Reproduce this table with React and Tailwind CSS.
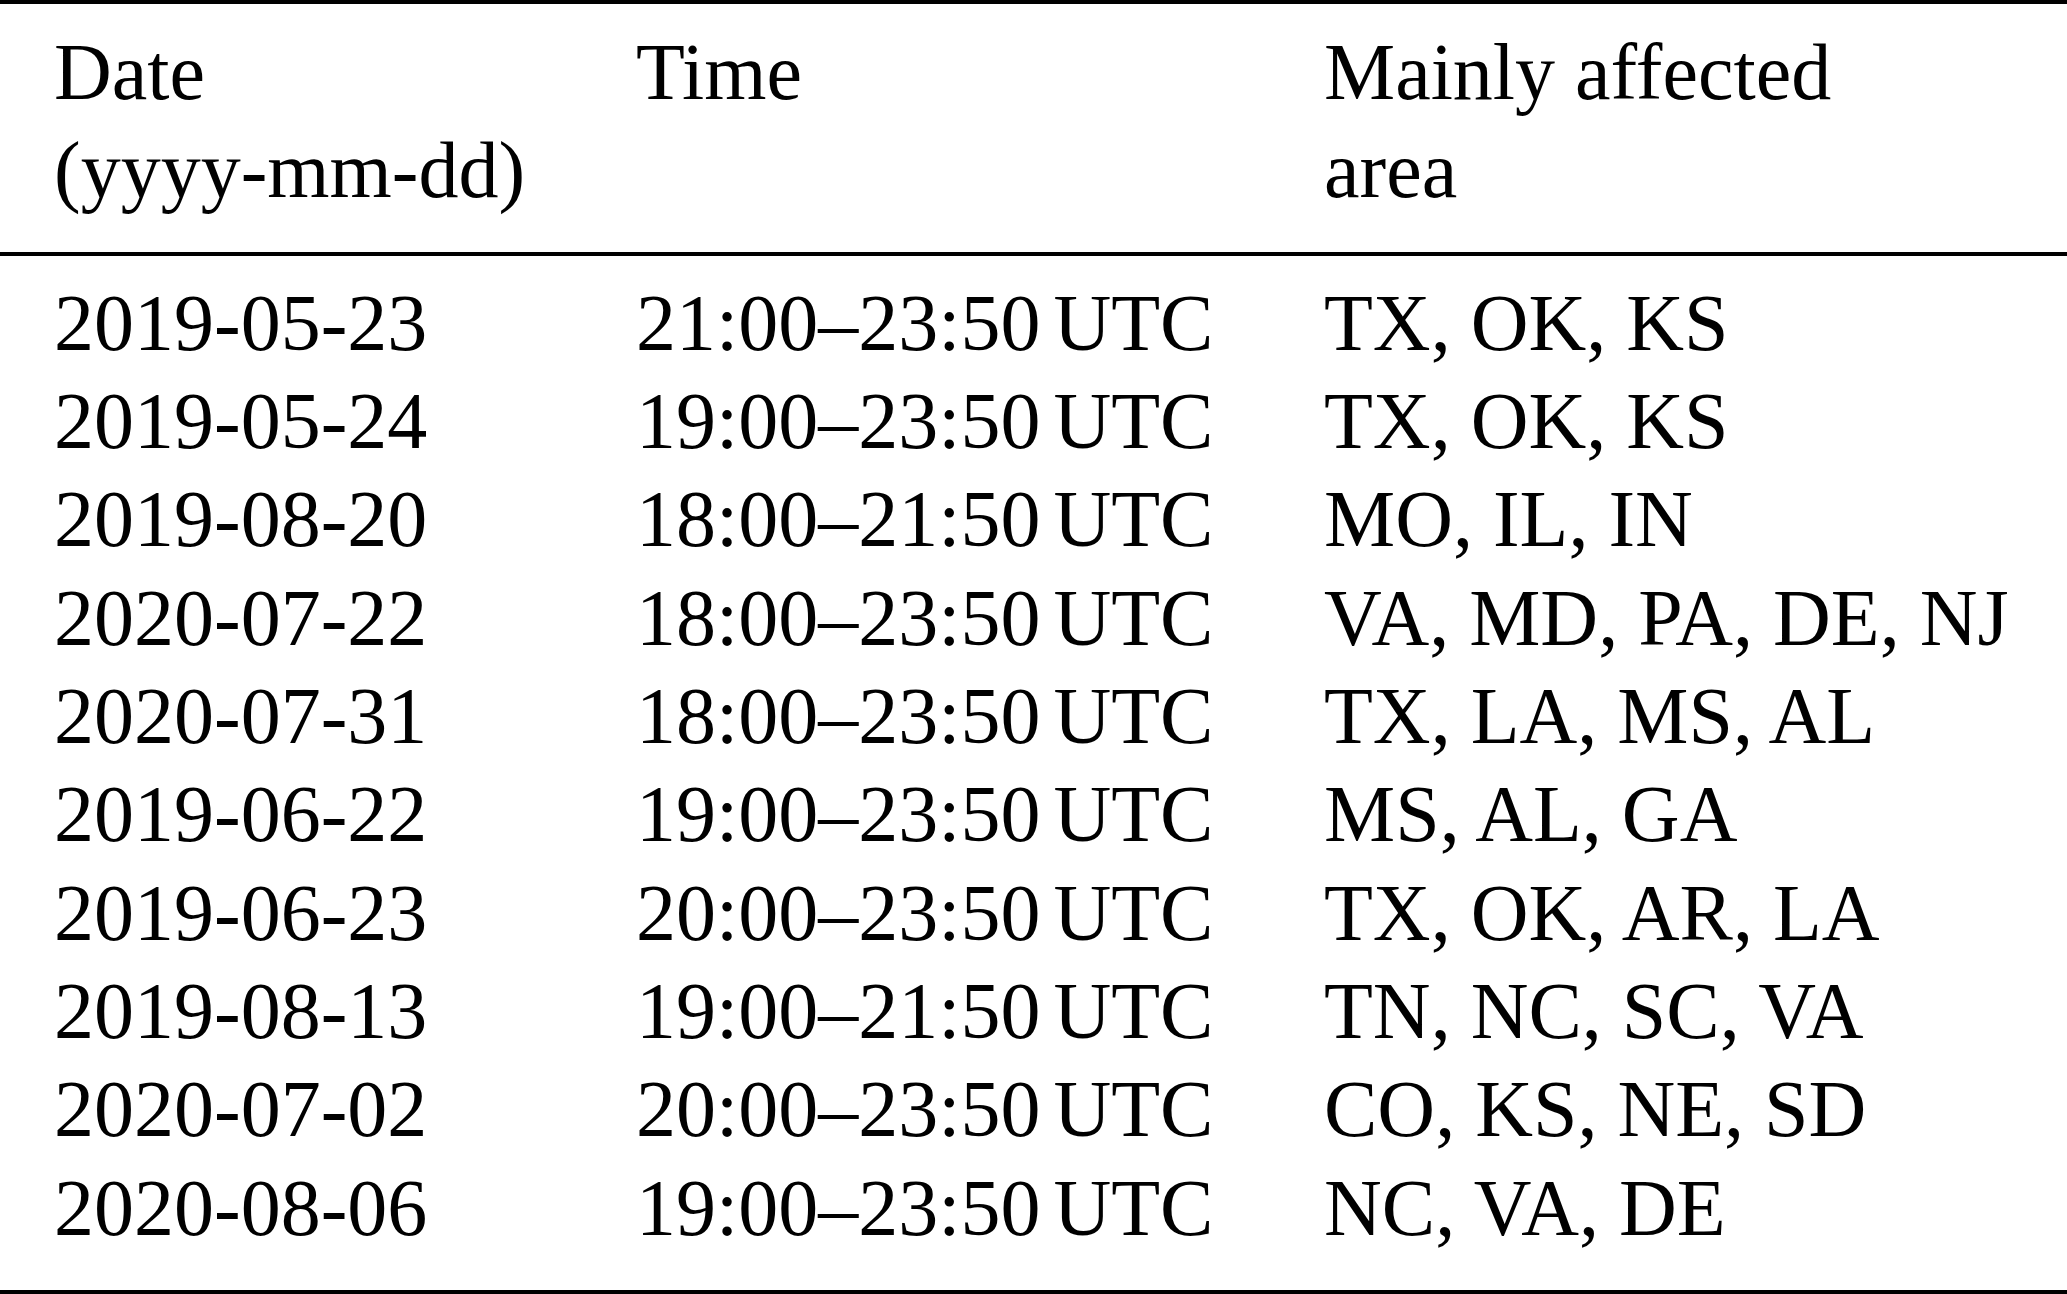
import React from "react";

const rows = [
  ["2019-05-23", "21:00–23:50", "TX, OK, KS"],
  ["2019-05-24", "19:00–23:50", "TX, OK, KS"],
  ["2019-08-20", "18:00–21:50", "MO, IL, IN"],
  ["2020-07-22", "18:00–23:50", "VA, MD, PA, DE, NJ"],
  ["2020-07-31", "18:00–23:50", "TX, LA, MS, AL"],
  ["2019-06-22", "19:00–23:50", "MS, AL, GA"],
  ["2019-06-23", "20:00–23:50", "TX, OK, AR, LA"],
  ["2019-08-13", "19:00–21:50", "TN, NC, SC, VA"],
  ["2020-07-02", "20:00–23:50", "CO, KS, NE, SD"],
  ["2020-08-06", "19:00–23:50", "NC, VA, DE"],
];

export default function App() {
  return (
    <div
      className="w-[2067px] h-[1294px] bg-white text-black text-[80px] leading-[98.33px] overflow-hidden"
      style={{ fontFamily: '"Liberation Serif", "Times New Roman", serif' }}
    >
      <div className="h-[4px] bg-black" />
      <div className="pt-[19px] pb-[32px] pl-[54px] grid grid-cols-[582px_688px_1fr]">
        <div>
          <div>Date</div>
          <div>(yyyy-mm-dd)</div>
        </div>
        <div>Time</div>
        <div>
          <div>Mainly affected</div>
          <div>area</div>
        </div>
      </div>
      <div className="h-[4px] bg-black" />
      <div className="pt-[18px] pb-[33px] pl-[54px] grid grid-cols-[582px_688px_1fr]">
        {rows.map((r, i) => (
          <React.Fragment key={i}>
            <div className="whitespace-nowrap">{r[0]}</div>
            <div className="whitespace-nowrap">
              {r[1]}
              <span className="ml-[13px]">UTC</span>
            </div>
            <div className="whitespace-nowrap">{r[2]}</div>
          </React.Fragment>
        ))}
      </div>
      <div className="h-[4px] bg-black" />
    </div>
  );
}
